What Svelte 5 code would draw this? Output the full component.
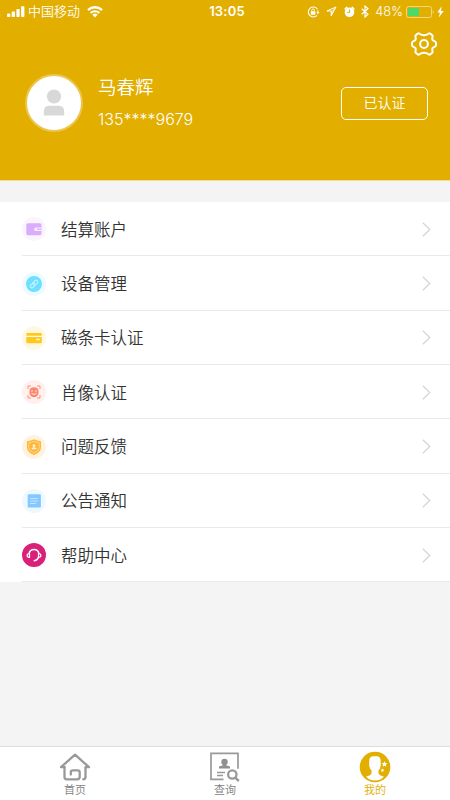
<script lang="ts">
	type Item = { key: string; label: string; tint: string };

	const ITEMS: Item[] = [
		{ key: 'wallet', label: '结算账户', tint: '#f9f4fe' },
		{ key: 'device', label: '设备管理', tint: '#ebfbff' },
		{ key: 'card', label: '磁条卡认证', tint: '#fff8e0' },
		{ key: 'face', label: '肖像认证', tint: '#fff0ed' },
		{ key: 'shield', label: '问题反馈', tint: '#fff3df' },
		{ key: 'notice', label: '公告通知', tint: '#eef8ff' },
		{ key: 'help', label: '帮助中心', tint: '#d9207a' }
	];

	const TABS = [
		{ key: 'home', label: '首页' },
		{ key: 'query', label: '查询' },
		{ key: 'mine', label: '我的' }
	];

	let active = $state('mine');
</script>

<div class="screen">
	<header class="header">
		<div class="status">
			<div class="status-left">
				<svg width="18" height="12" viewBox="0 0 18 12" fill="#fff">
					<rect x="0" y="7.5" width="3.3" height="3.5" rx="0.8" />
					<rect x="4.7" y="5.5" width="3.3" height="5.5" rx="0.8" />
					<rect x="9.4" y="3" width="3.3" height="8" rx="0.8" />
					<rect x="14.1" y="0.3" width="3.3" height="10.7" rx="0.8" />
				</svg>
				<span class="carrier">中国移动</span>
				<svg class="wifi" width="16" height="12" viewBox="0 0 16 12" fill="none" stroke="#fff">
					<path d="M1 4.1a10.2 10.2 0 0 1 14 0" stroke-width="2.4" />
					<path d="M3.6 6.9a6.4 6.4 0 0 1 8.8 0" stroke-width="2" />
					<path d="M8 11.4 5.4 8.8a3.8 3.8 0 0 1 5.2 0z" fill="#fff" stroke="none" />
				</svg>
			</div>
			<span class="time">13:05</span>
			<div class="status-right">
				<svg width="13" height="12" viewBox="0 0 13 12" fill="none" stroke="#fff">
					<path d="M10.4 3.1A5 5 0 1 0 10 9.4M10.9 4.3v2.6" stroke-width="1.1" />
					<path d="M9.3 6.2h3.2l-1.6 2z" fill="#fff" stroke="none" />
					<rect x="3.8" y="5.3" width="4.6" height="3.4" rx="0.4" fill="#fff" stroke="none" />
					<path d="M4.8 5.5V4.3a1.3 1.3 0 0 1 2.6 0v1.2" stroke-width="0.9" />
				</svg>
				<svg class="locate" width="11" height="11" viewBox="0 0 11 11" fill="none" stroke="#fff" stroke-width="1">
					<path d="M10 1 .9 5h4.3v4.9z" stroke-linejoin="round" />
					<path d="M10 1 5.2 5v4.9z" fill="#fff" fill-opacity="0.5" stroke="none" />
				</svg>
				<svg class="alarm" width="11" height="12" viewBox="0 0 11 12">
					<circle cx="5.5" cy="6.3" r="4.8" fill="#fff" />
					<path d="M1.1 3 2.8 1.4M9.9 3 8.2 1.4" stroke="#fff" stroke-width="1.5" stroke-linecap="round" />
					<path d="M5.6 3.4v3H3.3" stroke="#e2ae00" stroke-width="1" fill="none" />
				</svg>
				<svg class="bluetooth" width="8" height="13" viewBox="0 0 8 13" fill="none" stroke="#fff" stroke-width="1.2">
					<path d="m.7 3.7 6.3 5.5-3 2.8V1l3 2.8L.7 9.2" />
				</svg>
				<span class="percent">48%</span>
				<svg class="battery" width="28" height="12" viewBox="0 0 28 12">
					<rect x="0.5" y="0.5" width="25" height="11" rx="2" fill="none" stroke="#f1d77d" />
					<path d="M26.7 4v4q1-.6 1-2t-1-2z" fill="#f1d77d" />
					<rect x="2" y="2" width="11" height="8" fill="#4cd964" />
				</svg>
				<svg class="bolt" width="7" height="12" viewBox="0 0 7 12" fill="#fff">
					<path d="M4.6.3.4 6.6h2.5L1.8 11.6 6.7 5H4z" />
				</svg>
			</div>
		</div>

		<div class="tools">
			<svg width="26" height="24" viewBox="-13 -12 26 24" fill="none" stroke="#fff" stroke-width="2">
				<path
					d="M-6.5-10.2Q-5.5-11-4.5-10.3Q-2.5-8.8 0-8.8T4.5-10.3Q5.5-11 6.5-10.2L8.2-8.8Q8.9-8 8.5-7Q7.5-3.5 10.5-2.9Q12-2.3 12-1V1Q12 2.3 10.5 2.9Q7.5 3.5 8.5 7Q8.9 8 8.2 8.8L6.5 10.2Q5.5 11 4.5 10.3Q2.5 8.8 0 8.8T-4.5 10.3Q-5.5 11-6.5 10.2L-8.2 8.8Q-8.9 8-8.5 7Q-7.5 3.5-10.5 2.9Q-12 2.3-12 1V-1Q-12-2.3-10.5-2.9Q-7.5-3.5-8.5-7Q-8.9-8-8.2-8.8z"
					stroke-linejoin="round"
				/>
				<circle r="3.9" />
			</svg>
		</div>

		<div class="profile">
			<div class="avatar">
				<svg width="22" height="28" viewBox="0 0 22 28" fill="#d8d8d8">
					<circle cx="11" cy="7.5" r="7.1" />
					<path d="M.8 26.5v-3.5q0-6.2 5-6.2h10.4q5 0 5 6.2v3.5z" />
				</svg>
			</div>
			<div class="who">
				<div class="name">马春辉</div>
				<div class="phone">135****9679</div>
			</div>
			<button class="badge">已认证</button>
		</div>
	</header>

	<ul class="menu">
		{#each ITEMS as item (item.key)}
			<li class="row">
				<span class="icon" style="background:{item.tint}">
					<svg width="24" height="24" viewBox="0 0 24 24" fill="none">
						{#if item.key === 'wallet'}
							<rect x="4.3" y="6.2" width="15.2" height="12" rx="1.6" fill="#d9acfc" />
							<path d="M19.5 10.5H14q-1.9 0-1.9 1.7t1.9 1.7h5.5z" fill="#f9f0ff" />
							<path d="M15 12.2h4.5" stroke="#d9acfc" stroke-width="1.3" />
						{:else if item.key === 'device'}
							<circle cx="12" cy="12" r="8" fill="#6edfff" />
							<g transform="rotate(-45 12 12)" stroke="#c9f4ff" stroke-width="1">
								<rect x="7.3" y="10.4" width="5.7" height="3.3" rx="1.65" />
								<rect x="11" y="10.4" width="5.7" height="3.3" rx="1.65" />
							</g>
						{:else if item.key === 'card'}
							<path d="M4.3 8.5q0-1.4 1.3-1.4h13q1.2 0 1.2 1.4v1.2H4.3zM4.3 11h15.5v5q0 1.3-1.2 1.3h-13q-1.3 0-1.3-1.3z" fill="#ffc81e" />
							<path d="M14.2 13.5h3.5" stroke="#fff8e0" stroke-width="1.4" />
						{:else if item.key === 'face'}
							<path d="M6 9V6h3M15 6h3v3M18 15v3h-3M9 18H6v-3" stroke="#fb917b" />
							<path d="M7.5 11q0-3.7 4.5-3.7t4.5 3.7v2.2q-1 4-4.5 4t-4.5-4z" fill="#fa876e" />
							<circle cx="10" cy="11" r="0.8" fill="#fff0ed" />
							<circle cx="14" cy="11" r="0.8" fill="#fff0ed" />
							<path d="M9.5 13.5q2.5 1.8 5 0" stroke="#fff0ed" />
						{:else if item.key === 'shield'}
							<path d="M12 4.3q3 1.7 7 1.9v6q0 4.9-7 7.7-7-2.8-7-7.7v-6q4-.2 7-1.9z" fill="#ffb739" />
							<path d="M12 6.3q2.5 1.2 5.2 1.4v4.7q0 3.4-5.2 5.6-5.2-2.2-5.2-5.6V7.7q2.700-.2 5.200-1.400z" stroke="#ffdc9c" stroke-width="0.8" />
							<circle cx="12" cy="10.7" r="1.4" fill="#fff3df" />
							<path d="M9.4 14.3q.3-1.6 1.9-2h1.4q1.6.4 1.9 2z" fill="#fff3df" />
						{:else if item.key === 'notice'}
							<rect x="5.7" y="5.3" width="13.2" height="13.3" rx="1.2" fill="#85c8ff" />
							<path d="M8 9.5h8M8 12h8M8 14.5h6" stroke="#cae7ff" stroke-width="0.9" />
						{:else}
							<g stroke="#fff" stroke-width="1.5" stroke-linecap="round">
								<path d="M7.1 10.5a5 5 0 0 1 9.8 0" />
								<path d="M7.5 10.5q-2.4.2-2.4 2t2.4 1.9zM16.5 10.5q2.4.2 2.4 2t-2.4 1.9z" stroke-linejoin="round" stroke-width="1.2" />
								<path d="M16.5 14.3q-1 3-4.2 3.4" />
							</g>
						{/if}
					</svg>
				</span>
				<div class="row-body">
					<span class="row-label">{item.label}</span>
					<svg width="9" height="15" viewBox="0 0 9 15" fill="none" stroke="#d4d4d4" stroke-width="1.2">
						<path d="m.8.8 7 6.7-7 6.7" />
					</svg>
				</div>
			</li>
		{/each}
	</ul>

	<nav class="tabs">
		{#each TABS as tab (tab.key)}
			<button class="tab" class:active={tab.key === active} onclick={() => (active = tab.key)}>
				<svg width="32" height="32" viewBox="0 0 32 32" fill="none">
					{#if tab.key === 'home'}
						<g stroke="#999" stroke-width="2.3" stroke-linecap="round" stroke-linejoin="round">
							<path d="M5.5 16.2H2L16 3.7l14 12.5h-3.5V26q0 2.3-2.3 2.3" />
							<path d="M5.5 16.2V26q0 2.3 2.3 2.3h10.4q2.5 0 2.5-2.5v-4.5q0-2-2-2h-4.9q-2 0-2 2v2.3" />
						</g>
					{:else if tab.key === 'query'}
						<path d="M14.5 28.3H2V2.3h27v15.5" stroke="#999" stroke-width="1.7" />
						<circle cx="15.5" cy="11" r="3.2" fill="#8f8f8f" />
						<path d="M14 12h3v2.3l4 1.1v2H10v-2l4-1.1z" fill="#8f8f8f" />
						<path d="M8 21.5h8M8 24.5h6" stroke="#999" stroke-width="1.4" />
						<circle cx="23.3" cy="23.5" r="4.2" stroke="#999" stroke-width="2.3" />
						<path d="m26.2 26.7 3.6 3.3" stroke="#999" stroke-width="2.4" />
					{:else}
						<circle cx="16" cy="16" r="15.3" fill="#e2ae00" />
						<path d="M10.2 10q0-4.7 4.3-4.7h3.2q4 0 4 4.7v5q-.6 3.2-2.2 4.3v3.2q1 2.2 5.3 3-2.5 4-8.8 4.1-6.3-.1-8.8-4.1 4.3-.8 5.3-3v-3.2Q10.8 18 10.2 15z" fill="#fff" />
						<path d="m25.5 10.2.9 1.9 2 .2-1.5 1.4.4 2-1.8-1-1.8 1 .4-2-1.5-1.4 2-.2zM23.5 17.4l.5 1.2 1.3.2-1 .9.2 1.3-1-.7-1.2.7.3-1.3-1-.9 1.3-.2z" fill="#fff" />
					{/if}
				</svg>
				<span>{tab.label}</span>
			</button>
		{/each}
	</nav>
</div>

<style>
	:global(body) {
		margin: 0;
	}
	.screen {
		width: 450px;
		height: 800px;
		display: flex;
		flex-direction: column;
		overflow: hidden;
		background: #f4f4f4;
		font-family: 'Inter', 'Noto Sans CJK SC', sans-serif;
		color: #333;
	}
	svg {
		display: block;
		flex-shrink: 0;
	}
	button {
		font-family: inherit;
		padding: 0;
		background: none;
		border: 0;
	}
	.header {
		box-sizing: border-box;
		height: 181px;
		flex-shrink: 0;
		background: #e2ae00;
		color: #fff;
		border-bottom: 1px solid #f0dc9d;
	}
	.status {
		height: 23px;
		padding: 0 6px 0 7px;
		display: grid;
		grid-template-columns: 1fr auto 1fr;
		align-items: center;
		font-size: 13px;
		line-height: 23px;
	}
	.status-left,
	.status-right {
		display: flex;
		align-items: center;
	}
	.status-right {
		justify-content: flex-end;
	}
	.carrier {
		margin-left: 3px;
		font-weight: 350;
	}
	.wifi {
		margin-left: 7px;
	}
	.time {
		padding-left: 3px;
		font-size: 13px;
		font-weight: 600;
		letter-spacing: 0.2px;
	}
	.locate {
		margin-left: 6px;
	}
	.alarm {
		margin-left: 7px;
	}
	.bluetooth {
		margin-left: 6px;
	}
	.percent {
		margin-left: 6px;
		font-size: 12.8px;
		font-weight: 350;
	}
	.battery {
		margin-left: 3px;
	}
	.bolt {
		margin-left: 3px;
	}
	.tools {
		height: 42px;
		padding: 0 13px;
		display: flex;
		justify-content: flex-end;
		align-items: center;
	}
	.profile {
		display: flex;
		align-items: center;
		padding: 5px 22px 0 25px;
	}
	.avatar {
		width: 54px;
		height: 54px;
		display: flex;
		align-items: center;
		justify-content: center;
		background: #fff;
		border: 2.5px solid #ebc64d;
		border-radius: 50%;
	}
	.who {
		flex: 1;
		margin-left: 15px;
		padding-top: 2px;
	}
	.name {
		font-size: 18.5px;
		line-height: 30px;
		font-weight: 350;
	}
	.phone {
		font-size: 16px;
		line-height: 34px;
		font-weight: 350;
	}
	.badge {
		width: 87px;
		height: 33px;
		border: 1px solid #fff;
		border-radius: 5px;
		color: #fff;
		font-size: 14px;
		font-weight: 350;
		line-height: 29px;
		padding-bottom: 2px;
	}
	.menu {
		list-style: none;
		margin: 21px 0 0;
		padding: 0;
		background: #fff;
	}
	.row {
		display: flex;
		align-items: center;
		height: 54.35px;
		padding-left: 22px;
		background: linear-gradient(#e9e9e9, #e9e9e9) 22px 100% / 100% 1px no-repeat;
	}
	.icon {
		width: 24px;
		height: 24px;
		border-radius: 50%;
	}
	.row-body {
		flex: 1;
		display: flex;
		align-items: center;
		justify-content: space-between;
		padding: 0 19px 0 15px;
	}
	.row-label {
		padding-bottom: 1px;
		font-size: 16.5px;
		font-weight: 350;
	}
	.tabs {
		margin-top: auto;
		height: 53px;
		display: grid;
		grid-template-columns: repeat(3, 1fr);
		background: #fff;
		border-top: 1px solid #dedede;
	}
	.tab {
		display: flex;
		flex-direction: column;
		align-items: center;
		padding-top: 4px;
		color: #808080;
		font-size: 11px;
		font-weight: 350;
		line-height: 15px;
	}
	.tab.active {
		color: #e2ae00;
	}
</style>
